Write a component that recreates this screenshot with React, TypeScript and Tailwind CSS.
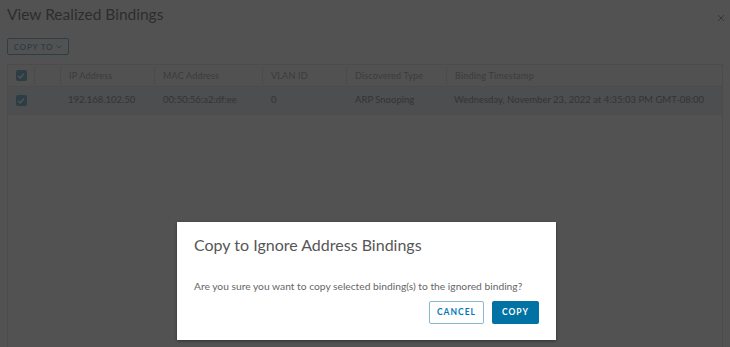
import React from "react";

const Check = () => (
  <div className="flex h-[11px] w-[11px] items-center justify-center rounded-[2px] bg-[#0072a3]">
    <svg width="8" height="8" viewBox="0 0 8 8" fill="none">
      <path d="M1.2 4.1 L3.2 6 L6.8 1.8" stroke="#ffffff" strokeWidth="1.4" />
    </svg>
  </div>
);

const HeadCell = ({ children, sep = true }: { children?: React.ReactNode; sep?: boolean }) => (
  <div className="flex h-full items-center">
    {sep && <div className="h-[18px] w-px bg-[#cccccc]" />}
    <div className="pl-[8px] text-[9px] tracking-[0.2px] text-[#666666]">{children}</div>
  </div>
);

export default function App() {
  return (
    <div className="relative h-screen w-full overflow-hidden bg-white font-['Lato',sans-serif]">
      <div className="flex items-start justify-between pl-[7px] pr-[5px] pt-[4px]">
        <h1 className="text-[15.5px] leading-[20px] text-[#000000]">View Realized Bindings</h1>
        <svg width="8" height="8" viewBox="0 0 8 8" className="mt-[10px]">
          <path d="M1 1 L7 7 M7 1 L1 7" stroke="#444" strokeWidth="1" />
        </svg>
      </div>
      <div className="mt-[14px] px-[7px]">
        <button className="flex h-[17px] w-[62px] items-center justify-center gap-[3px] rounded-[2px] border border-[#0079b8] text-[8px] font-bold tracking-[0.8px] text-[#0079b8]">
          COPY TO
          <svg width="6" height="4" viewBox="0 0 6 4">
            <path d="M0.5 0.5 L3 3 L5.5 0.5" stroke="#0079b8" fill="none" strokeWidth="1" />
          </svg>
        </button>
      </div>
      <div className="mx-[7px] mt-[9px] h-full border border-[#cccccc] text-[#000000]">
        <div className="grid h-[22px] grid-cols-[26px_26px_94px_108px_84px_100px_1fr] border-b border-[#cccccc] bg-[#f5f5f5]">
          <div className="flex items-center justify-center">
            <Check />
          </div>
          <HeadCell />
          <HeadCell>IP Address</HeadCell>
          <HeadCell>MAC Address</HeadCell>
          <HeadCell>VLAN ID</HeadCell>
          <HeadCell>Discovered Type</HeadCell>
          <HeadCell>Binding Timestamp</HeadCell>
        </div>
        <div className="grid h-[28px] grid-cols-[26px_26px_94px_108px_84px_100px_1fr] border-b border-[#dddddd] bg-[#d8e3e9] text-[9.5px] text-[#333333]">
          <div className="flex items-center justify-center">
            <Check />
          </div>
          <div />
          <div className="flex items-center pl-[8px]">192.168.102.50</div>
          <div className="flex items-center pl-[9px]">00:50:56:a2:df:ee</div>
          <div className="flex items-center pl-[9px]">0</div>
          <div className="flex items-center pl-[9px]">ARP Snooping</div>
          <div className="flex items-center whitespace-nowrap pl-[8px]">Wednesday, November 23, 2022 at 4:35:03 PM GMT-08:00</div>
        </div>
      </div>

      <div className="absolute inset-0 bg-[rgba(52,52,52,0.85)]" />

      <div className="absolute left-[177px] top-[222px] flex h-[118px] w-[379px] flex-col bg-white px-[17px] pb-[16px] pt-[13px] shadow-[0_1px_3px_rgba(0,0,0,0.4)]">
        <div className="text-[16px] leading-[20px] text-[#565656]">Copy to Ignore Address Bindings</div>
        <div className="mt-[24px] whitespace-nowrap text-[10.25px] leading-[14px] text-[#666666]">
          Are you sure you want to copy selected binding(s) to the ignored binding?
        </div>
        <div className="mt-auto flex justify-end gap-[8px]">
          <button className="h-[23px] w-[55px] rounded-[2px] border border-[#8ab7d0] bg-white text-[8.5px] font-bold tracking-[1px] text-[#0079b8]">
            CANCEL
          </button>
          <button className="h-[23px] w-[47px] rounded-[2px] bg-[#0072a3] text-[8.5px] font-bold tracking-[1px] text-white">
            COPY
          </button>
        </div>
      </div>
    </div>
  );
}
